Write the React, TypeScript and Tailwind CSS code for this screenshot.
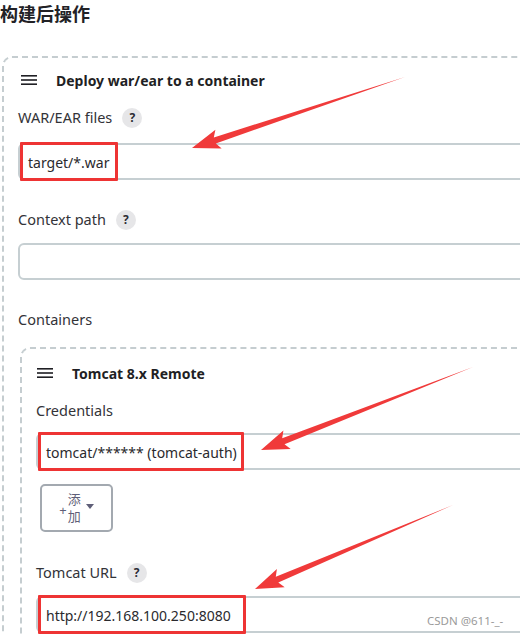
import React from "react";

type Pt = [number, number];

function arrowPoints(tail: Pt, tip: Pt) {
  const dx = tip[0] - tail[0];
  const dy = tip[1] - tail[1];
  const len = Math.hypot(dx, dy);
  const ux = dx / len;
  const uy = dy / len;
  const nx = -uy;
  const ny = ux;
  const L = 24; // head length
  const h = 10; // head half width
  const w = 3.2; // shaft half width at the head
  const bx = tip[0] - ux * L;
  const by = tip[1] - uy * L;
  const pts: Pt[] = [
    tail,
    [bx + nx * w, by + ny * w],
    [bx + nx * h - ux * 4, by + ny * h - uy * 4],
    tip,
    [bx - nx * h - ux * 4, by - ny * h - uy * 4],
    [bx - nx * w, by - ny * w],
  ];
  return pts.map((p) => `${p[0].toFixed(1)},${p[1].toFixed(1)}`).join(" ");
}

function Burger() {
  return (
    <svg width="16" height="10" viewBox="0 0 16 10" className="shrink-0">
      <rect x="0" y="0" width="16" height="1.6" fill="#1f1f24" />
      <rect x="0" y="4.2" width="16" height="1.6" fill="#1f1f24" />
      <rect x="0" y="8.4" width="16" height="1.6" fill="#1f1f24" />
    </svg>
  );
}

function Help() {
  return (
    <span className="ml-[10px] flex h-[20px] w-[20px] items-center justify-center rounded-full bg-[#e6e6e8] text-[12px] font-bold text-[#2b2b33]">
      ?
    </span>
  );
}

function Label({ text, help = false, className = "" }: { text: string; help?: boolean; className?: string }) {
  return (
    <div className={"flex h-[20px] items-center text-[14.5px] text-[#333338] " + className}>
      <span>{text}</span>
      {help && <Help />}
    </div>
  );
}

function Field({ value, boxWidth, className = "" }: { value?: string; boxWidth?: number; className?: string }) {
  return (
    <div className={"relative h-[37px] w-[640px] rounded-md border-2 border-[#c6cfd2] " + className}>
      {value && (
        <span className="absolute left-[8px] top-[7px] text-[14px] text-[#2a2a2e]">{value}</span>
      )}
      {boxWidth && (
        <div
          className="absolute left-0 -top-[3px] h-[39px] rounded-[1px] border-[3px] border-[#ee3434]"
          style={{ width: boxWidth }}
        />
      )}
    </div>
  );
}

export default function App() {
  const arrows: [Pt, Pt][] = [
    [[405, 77], [192, 148]],
    [[473, 367], [261, 450]],
    [[453, 505], [255, 589]],
  ];

  return (
    <div className="relative h-[635px] w-[520px] overflow-hidden bg-white font-['Noto_Sans','Noto_Sans_CJK_SC',sans-serif]">
      <div className="h-[28px] text-[18px] font-bold leading-[28px] text-[#222226]">构建后操作</div>

      <div className="ml-[2px] mt-[28px] w-[700px] rounded-tl-[10px] border-2 border-b-0 border-r-0 border-dashed border-[#c5cdd0] pl-[14px] pt-[12px] pb-[40px]">
        <div className="flex h-[20px] items-center">
          <div className="ml-[3px]"><Burger /></div>
          <span className="ml-[19px] text-[14px] font-bold text-[#1f1f24]">Deploy war/ear to a container</span>
        </div>

        <Label text="WAR/EAR files" help className="mt-[18px]" />
        <Field value="target/*.war" boxWidth={98} className="mt-[15px]" />

        <Label text="Context path" help className="mt-[30px]" />
        <Field className="mt-[13px]" />

        <Label text="Containers" className="mt-[30px]" />

        <div className="ml-[2px] mt-[17px] w-[660px] rounded-tl-[10px] border-2 border-b-0 border-r-0 border-dashed border-[#c5cdd0] pl-[14px] pt-[14px] pb-[40px]">
          <div className="flex h-[20px] items-center">
            <div className="ml-[1px]"><Burger /></div>
            <span className="ml-[19px] text-[14px] font-bold text-[#1f1f24]">Tomcat 8.x Remote</span>
          </div>

          <Label text="Credentials" className="mt-[18px]" />
          <Field value="tomcat/****** (tomcat-auth)" boxWidth={206} className="mt-[12px]" />

          <button className="ml-[4px] mt-[14px] flex h-[48px] w-[73px] items-center justify-center rounded-[5px] border-2 border-[#a3a9b0] bg-white text-[#5f5f78]">
            <span className="mr-[1px] mt-[4px] text-[13px] leading-none">+</span>
            <span className="flex flex-col text-[13px] leading-[17px]">
              <span>添</span>
              <span>加</span>
            </span>
            <svg width="8" height="5" viewBox="0 0 8 5" className="ml-[5px] -mt-[4px]">
              <path d="M0 0 L8 0 L4 5 Z" fill="#5f5f78" />
            </svg>
          </button>

          <Label text="Tomcat URL" help className="mt-[31px]" />
          <Field value="http://192.168.100.250:8080" boxWidth={208} className="mt-[13px]" />
        </div>
      </div>

      <svg className="pointer-events-none absolute left-0 top-0" width="520" height="635" viewBox="0 0 520 635">
        {arrows.map(([t, p], i) => (
          <polygon key={i} points={arrowPoints(t, p)} fill="#f03a3a" />
        ))}
      </svg>

      <div className="pointer-events-none absolute left-[427px] top-[612px] text-[11.5px] text-[#9a9a9a]">CSDN @611-_-</div>
    </div>
  );
}
